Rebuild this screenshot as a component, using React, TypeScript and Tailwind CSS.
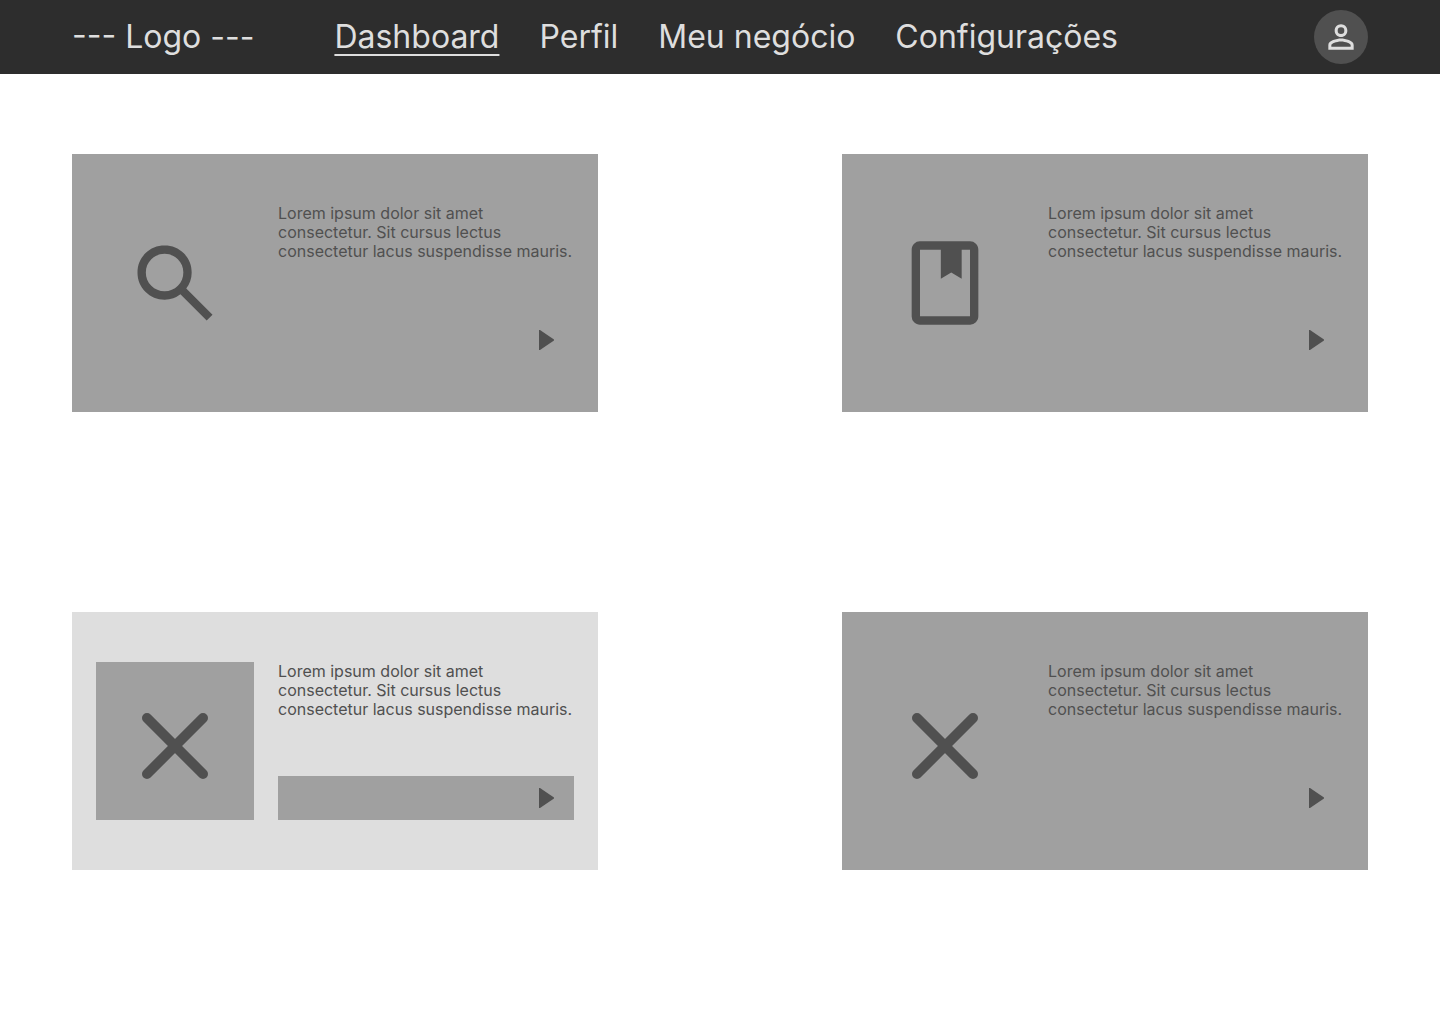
import type { ReactNode } from "react";

const navItems = ["Dashboard", "Perfil", "Meu negócio", "Configurações"];

function PersonIcon() {
  return (
    <svg viewBox="0 0 24 24" className="size-[38px]" fill="currentColor" aria-hidden="true">
      <path d="M12 12c-2.2 0-4-1.8-4-4s1.800-4 4-4 4 1.800 4 4-1.800 4-4 4Zm0-1.900a2.100 2.100 0 1 0 0-4.200 2.100 2.100 0 0 0 0 4.200Z" />
      <path d="M4 20v-3c0-2.660 5.330-4 8-4s8 1.340 8 4v3H4Zm1.900-1.900h12.200V17c0-.64-3.130-2.100-6.100-2.100S5.900 16.360 5.900 17v1.100Z" />
    </svg>
  );
}

function SearchIcon() {
  return (
    <svg viewBox="0 0 24 24" className="size-[100px]" fill="currentColor" aria-hidden="true">
      <path d="M19.600 21l-6.300-6.300a6.100 6.100 0 0 1-1.725.950A6.100 6.100 0 0 1 9.500 16c-1.817 0-3.354-.629-4.612-1.888C3.629 12.854 3 11.317 3 9.500s.629-3.354 1.888-4.613C6.146 3.629 7.683 3 9.500 3s3.354.629 4.613 1.887C15.371 6.146 16 7.683 16 9.500a6.100 6.100 0 0 1-.350 2.075 6.100 6.100 0 0 1-.950 1.725L21 19.600 19.600 21ZM9.500 14c1.250 0 2.313-.437 3.188-1.312S14 10.750 14 9.500s-.437-2.312-1.312-3.187S10.750 5 9.500 5s-2.312.438-3.187 1.313S5 8.250 5 9.500s.438 2.313 1.313 3.188S8.250 14 9.500 14Z" />
    </svg>
  );
}

function BookIcon() {
  return (
    <svg viewBox="0 0 24 24" className="size-[100px]" fill="currentColor" aria-hidden="true">
      <path d="M6 22c-.55 0-1.021-.196-1.412-.587A1.928 1.928 0 0 1 4 20V4c0-.55.196-1.021.588-1.412A1.928 1.928 0 0 1 6 2h12c.55 0 1.021.196 1.413.588.391.391.587.862.587 1.412v16c0 .55-.196 1.021-.587 1.413A1.928 1.928 0 0 1 18 22H6Zm0-2h12V4h-2v7l-2.500-1.500L11 11V4H6v16Z" />
    </svg>
  );
}

function CrossIcon() {
  return (
    <svg viewBox="0 0 100 100" className="size-[100px]" fill="none" stroke="currentColor" strokeWidth="10" strokeLinecap="round" aria-hidden="true">
      <path d="M22 27l56 56M78 27L22 83" />
    </svg>
  );
}

function PlayIcon() {
  return (
    <svg viewBox="0 0 16 20" className="h-5 w-4" fill="currentColor" aria-hidden="true">
      <path d="M1 0h1l14 9.400v1.200L2 20H1Z" />
    </svg>
  );
}

function Card({ icon, label, light = false }: { icon: ReactNode; label: string; light?: boolean }) {
  return (
    <article className={`flex gap-6 px-6 py-[50px] text-[#505050] ${light ? "bg-[#dedede]" : "bg-[#a0a0a0]"}`}>
      <div className="flex size-[158px] shrink-0 items-center justify-center bg-[#a0a0a0]">{icon}</div>
      <div className="flex flex-1 flex-col justify-between">
        <p className="text-base leading-[19px]">
          Lorem ipsum dolor sit amet
          <br />
          consectetur. Sit cursus lectus
          <br />
          <span className="whitespace-nowrap">consectetur lacus suspendisse mauris.</span>
        </p>
        <button type="button" aria-label={label} className="flex h-11 items-center justify-end bg-[#a0a0a0] pr-5">
          <PlayIcon />
        </button>
      </div>
    </article>
  );
}

export default function App() {
  return (
    <div className="min-h-screen bg-white font-['Inter',sans-serif]">
      <header className="flex h-[74px] items-center bg-[#2d2d2d] px-[72px] text-[32px] leading-[38px] font-normal whitespace-nowrap text-[#dedede]">
        <a href="#">--- Logo ---</a>
        <nav className="ml-20 flex gap-10">
          {navItems.map((item, i) => (
            <a key={item} href="#" aria-current={i === 0 ? "page" : undefined} className={i === 0 ? "underline decoration-2 underline-offset-[6px]" : ""}>
              {item}
            </a>
          ))}
        </nav>
        <button type="button" aria-label="Conta" className="ml-auto flex size-[54px] items-center justify-center rounded-full bg-[#505050]">
          <PersonIcon />
        </button>
      </header>
      <main className="grid grid-cols-2 gap-x-[244px] gap-y-[200px] px-[72px] py-20">
        <Card icon={<SearchIcon />} label="Abrir pesquisa" />
        <Card icon={<BookIcon />} label="Abrir livro" />
        <Card icon={<CrossIcon />} label="Abrir item 3" light />
        <Card icon={<CrossIcon />} label="Abrir item 4" />
      </main>
    </div>
  );
}
